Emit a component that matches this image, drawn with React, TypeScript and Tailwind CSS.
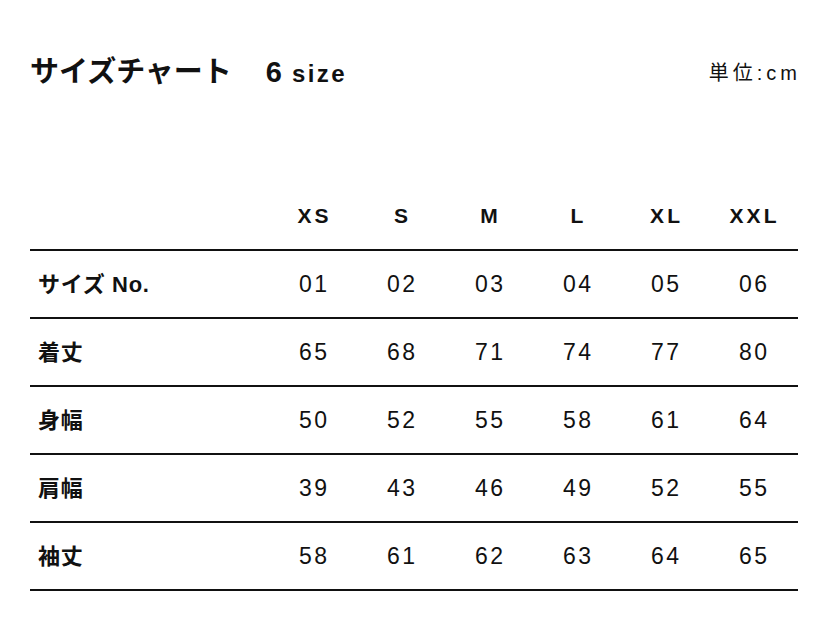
const sizes = ["XS", "S", "M", "L", "XL", "XXL"]

const rows: { label: string; values: string[] }[] = [
  { label: "サイズ No.", values: ["01", "02", "03", "04", "05", "06"] },
  { label: "着丈", values: ["65", "68", "71", "74", "77", "80"] },
  { label: "身幅", values: ["50", "52", "55", "58", "61", "64"] },
  { label: "肩幅", values: ["39", "43", "46", "49", "52", "55"] },
  { label: "袖丈", values: ["58", "61", "62", "63", "64", "65"] },
]

const font = "font-['Liberation_Sans','Noto_Sans_CJK_JP',sans-serif]"

export default function App() {
  return (
    <div className={`w-[828px] h-[636px] bg-white text-[#111] px-[30px] pt-[51px] ${font}`}>
      <div className="flex items-center justify-between h-[44px]">
        <div className="flex items-baseline">
          <span className="text-[29px] font-bold">サイズチャート</span>
          <span className="ml-[34px] text-[29px] font-bold">6</span>
          <span className="ml-[10px] text-[24px] font-bold tracking-[0.1em]">size</span>
        </div>
        <span className="text-[20px] tracking-[0.2em] mr-[-3px]">単位:cm</span>
      </div>

      <div className="mt-[88px]">
        <div className="flex h-[68px] items-center border-b-2 border-[#111]">
          <div className="w-[239px]" />
          {sizes.map((s) => (
            <div key={s} className="w-[88px] text-center text-[21px] font-bold tracking-[0.15em] pl-[0.15em]">
              {s}
            </div>
          ))}
        </div>
        {rows.map((r) => (
          <div key={r.label} className="flex h-[68px] items-center border-b-2 border-[#111]">
            <div className="w-[239px] pl-[8px] text-[22px] font-bold tracking-[0.03em]">{r.label}</div>
            {r.values.map((v, i) => (
              <div key={i} className="w-[88px] text-center text-[23px] tracking-[0.1em] pl-[0.1em]">
                {v}
              </div>
            ))}
          </div>
        ))}
      </div>
    </div>
  )
}
